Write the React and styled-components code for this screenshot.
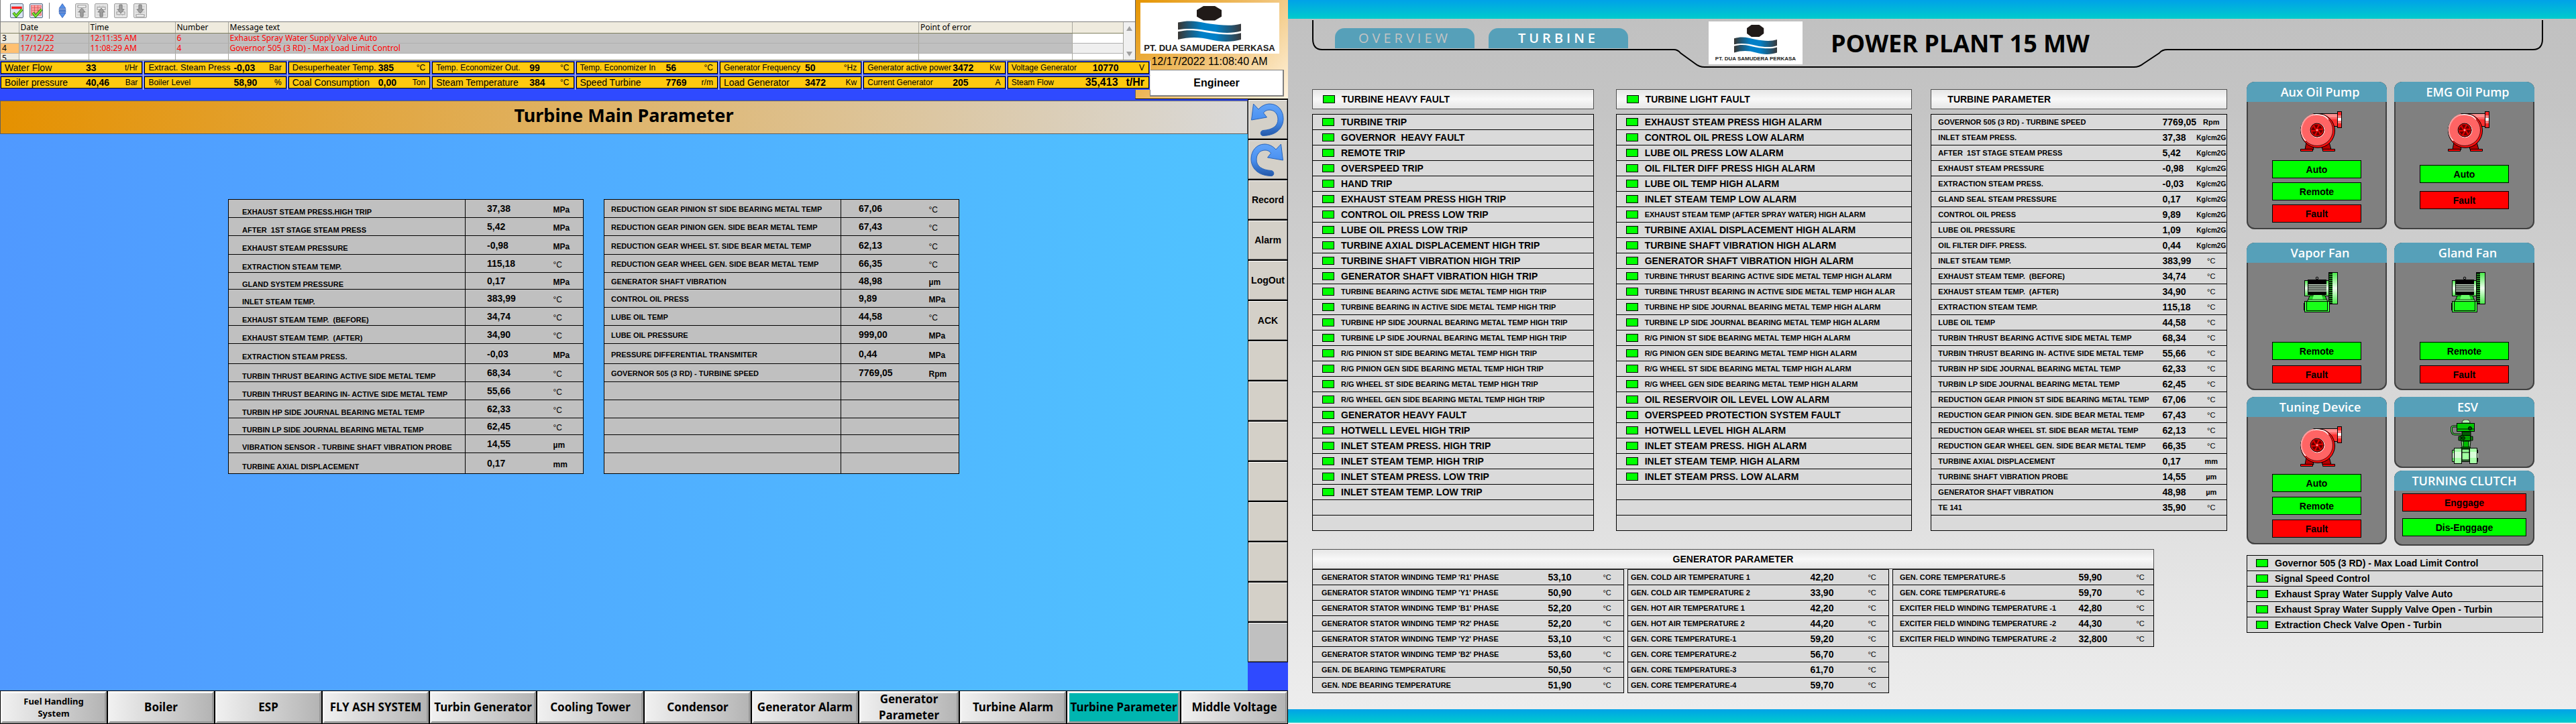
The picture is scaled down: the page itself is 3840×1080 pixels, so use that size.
import React from "react";
import styled, { createGlobalStyle } from "styled-components";

const ARIAL = '"Liberation Sans", Arial, sans-serif';
const HUMANIST = '"Noto Sans", "Open Sans", sans-serif';

const Global = createGlobalStyle`
  *, *::before, *::after { box-sizing: border-box; }
  body { margin: 0; background: #2f4aff; }
  button { font: inherit; color: inherit; cursor: pointer; }
  table { border-collapse: collapse; table-layout: fixed; width: 100%; }
  td, th { padding: 0; text-align: left; white-space: nowrap; }
`;

const Desktop = styled.div`
  display: flex;
  min-height: 100vh;
  font-family: ${ARIAL};
  color: #000;
`;

/* ---------- left monitor ---------- */

const Station = styled.section`
  flex: 1 1 0;
  min-width: 0;
  display: flex;
  flex-direction: column;
  background: #2f4aff;
`;

const Header = styled.header`
  display: grid;
  grid-template-columns: minmax(0, 1fr) 23px 205px;
  grid-template-rows: 90px 58px;
`;

const AlarmView = styled.div`
  grid-column: 1;
  grid-row: 1;
  overflow: hidden;
  background: #fff;
  border-left: 1px solid #808080;
  border-bottom: 1px solid #8a8a70;
`;

const Toolbar = styled.div`
  display: flex;
  align-items: center;
  gap: 9px;
  height: 33px;
  padding-left: 14px;
  border-bottom: 1px solid #808080;
`;

const ToolButton = styled.button`
  display: flex;
  padding: 0;
  border: 0;
  background: none;
`;

const ToolDivider = styled.span`
  width: 1px;
  height: 24px;
  background: #808080;
`;

const AlarmBody = styled.div`
  display: flex;
  align-items: stretch;
  height: 56px;
`;

const AlarmTable = styled.table`
  flex: 1;
  width: auto;
  min-width: 0;
  font: 12px/14px ${HUMANIST};
  align-self: flex-start;

  th { background: #efebde; font-weight: 400; height: 16px; border-bottom: 1px solid #808060; }
  td { height: 15px; border-bottom: 1px solid #b0b0b0; }
  th, td { padding-left: 2px; border-right: 1px solid #a8a8a0; }
`;

const AlarmRow = styled.tr`
  color: #ff0000;
  background: ${(p) => (p.$filled ? "#c0c0c0" : "#fff")};

  td:first-child { color: #000; background: ${(p) => (p.$current ? "#ffc070" : "#efebde")}; }
  td:last-child { background: ${(p) => (p.$current ? "#efefef" : "#fff")}; }
`;

const ScrollTrack = styled.div`
  width: 17px;
  display: flex;
  flex-direction: column;
  justify-content: space-between;
  align-items: center;
  padding: 6px 0 5px;
  background: #f0f0f0;
`;

const BrandBack = styled.div`
  grid-column: 2 / 4;
  grid-row: 1 / 3;
  border-left: 1px solid #606060;
  border-bottom: 1px solid #000;
  background: linear-gradient(135deg, #e59400 0%, #f0c070 50%, #fff4e0 100%);
`;

const Brand = styled.div`
  grid-column: 2 / 4;
  grid-row: 1 / 3;
  display: flex;
  flex-direction: column;
  align-items: center;
  padding: 4px 6px 0 0;
`;

const LogoBox = styled.figure`
  display: flex;
  flex-direction: column;
  align-items: center;
  justify-content: space-between;
  flex: none;
  width: ${(p) => p.$w}px;
  height: ${(p) => p.$h}px;
  margin: 0;
  padding: 5px 0 2px;
  background: #fff;

  figcaption {
    font: bold ${(p) => p.$font}px/12px ${ARIAL};
    color: #201a18;
    white-space: nowrap;
  }
`;

const Clock = styled.time`
  font-size: 16px;
  line-height: 24px;
`;

const UserBox = styled.div`
  align-self: flex-end;
  display: flex;
  align-items: center;
  justify-content: center;
  width: 200px;
  height: 40px;
  background: #fff;
  border: 1px solid #808080;
  border-width: 1px 2px 2px 1px;
  font-weight: 700;
  font-size: 16px;
`;

const Readings = styled.div`
  grid-column: 1 / 3;
  grid-row: 2;
  z-index: 1;
  align-self: start;
  display: grid;
  grid-template-columns: repeat(8, minmax(0, 1fr));
  grid-auto-rows: 22px;
  width: 100%;
`;

const ReadingFrame = styled.div`
  padding: 1px 1px 2px;
  background: #2f4aff;
  border-right: 1px solid #e0e0e0;
  border-top: 1px solid #a0a0a0;
`;

const Reading = styled.div`
  display: grid;
  grid-template-columns: ${(p) => p.$at}px minmax(0, 1fr) auto;
  align-items: center;
  height: 100%;
  padding: 0 6px 0 5px;
  background: #ffc90e;
  border: 1px solid #000;
  font-size: ${(p) => p.$size}px;
  line-height: 16px;
  white-space: nowrap;

  strong { font-size: ${(p) => (p.$wide ? 16 : 14)}px; }
  span:last-child { font-size: ${(p) => (p.$wide ? 16 : 12)}px; font-weight: ${(p) => (p.$wide ? 700 : 400)}; }
`;

const Body = styled.div`
  flex: 1;
  display: flex;
`;

const Canvas = styled.main`
  flex: 1;
  min-width: 0;
  display: flex;
  flex-direction: column;
  padding-top: 2px;
`;

const ScreenTitle = styled.h1`
  display: flex;
  align-items: center;
  justify-content: center;
  height: 50px;
  margin: 0;
  padding-bottom: 6px;
  border: 1px solid #606060;
  background: linear-gradient(90deg, #e59100, #d9d9d9);
  font: bold 27px/36px ${HUMANIST};
`;

const Stage = styled.div`
  flex: 1;
  display: grid;
  grid-template-columns: 340fr 530fr 30fr 530fr 430fr;
  align-items: start;
  padding-top: 97px;
  background: linear-gradient(90deg, #5099ff, #50c3ff);
`;

const StageTable = styled.table`
  grid-column: ${(p) => p.$col};
  background: #c0c0c0;
  border: 1px solid #000;
  font: bold 11px/12px ${ARIAL};

  tr { border-bottom: 1px solid #000; }
  th {
    padding-left: ${(p) => p.$pad}px;
    padding-top: ${(p) => p.$drop}px;
    border-right: 1px solid #000;
    white-space: pre;
  }
  td { font-size: 14px; padding-left: ${(p) => p.$value}px; }
  td:last-child { font-size: 12px; padding-left: 0; padding-top: 4px; }
`;

const StageRow = styled.tr`
  height: ${(p) => p.$h}px;
`;

const Unit = styled.span`
  font-weight: ${(p) => (p.$plain ? 400 : 700)};
`;

const SideNav = styled.nav`
  flex: none;
  display: flex;
  flex-direction: column;
  width: 60px;
`;

const SideButton = styled.button`
  display: flex;
  align-items: center;
  justify-content: center;
  height: 60px;
  padding: 0;
  border: 2px solid;
  border-color: #fff #808080 #808080 #fff;
  outline: 1px solid #000;
  outline-offset: -1px;
  background: ${(p) => (p.$spare ? "#c0c0c0" : "#d4d0c8")};
  font-weight: 700;
  font-size: 14px;
`;

const ScreenNav = styled.nav`
  display: grid;
  grid-template-columns: repeat(8, 160fr) 150fr 160fr 170fr 160fr;
  height: 50px;
`;

const ScreenButton = styled.button`
  min-width: 0;
  height: 50px;
  padding: 0 ${(p) => (p.$small ? 20 : 0)}px;
  overflow: hidden;
  border: 4px solid;
  border-color: #fff #999 #999 #f4f4f4;
  outline: 1px solid #000;
  outline-offset: -1px;
  background: ${(p) => (p.$active ? "#00b5b0" : "linear-gradient(90deg, #f0f0f0, #b4b4b4)")};
  font: bold ${(p) => (p.$small ? "13px/18px" : "17px/24px")} ${HUMANIST};
  white-space: ${(p) => (p.$wrap ? "normal" : "nowrap")};
  display: flex;
  align-items: center;
  justify-content: center;
`;

/* ---------- right monitor ---------- */

const Overview = styled.section`
  flex: 1 1 0;
  min-width: 0;
  display: flex;
  flex-direction: column;
  padding-bottom: 2px;
  background: linear-gradient(180deg, #c0c0c0 0%, #c4c4c4 14%, #eee 100%);
`;

const Band = styled.div`
  height: ${(p) => p.$h}px;
  background: linear-gradient(180deg, #00a2e8, #00cccc);
`;

const PlantHeader = styled.header`
  position: relative;
  display: flex;
  align-items: flex-start;
  height: 105px;
  padding: 4px 0 0 70px;
`;

const Outline = styled.svg`
  position: absolute;
  left: 0;
  top: 0;
  width: 100%;
  height: 76px;
  pointer-events: none;
`;

const Tab = styled.button`
  width: 208px;
  height: 30px;
  margin: 10px 21px 0 0;
  padding: 0;
  border: 0;
  border-radius: 14px 14px 0 0;
  background: #56a0b9;
  color: ${(p) => (p.$active ? "#fff" : "#c4c4c4")};
  font: ${(p) => (p.$active ? 600 : 400)} 20px/30px "Open Sans", sans-serif;
  letter-spacing: 5px;
`;

const PlantTitle = styled.h2`
  margin: 0 0 0 42px;
  font: bold 36px/66px "Open Sans", sans-serif;
  white-space: nowrap;
`;

const LogoSlot = styled.div`
  margin-left: 99px;
`;

const Content = styled.div`
  flex: 1;
  display: flex;
  gap: 29px;
  padding: 0 49px 0 36px;
`;

const Faults = styled.div`
  flex: 1;
  min-width: 0;
`;

const Columns = styled.div`
  display: grid;
  grid-template-columns: minmax(0, 420fr) 33px minmax(0, 442fr) 28px minmax(0, 442fr);
  align-items: start;
`;

const Group = styled.section`
  grid-column: ${(p) => p.$col};
`;

const GroupTitle = styled.h3`
  display: flex;
  align-items: center;
  justify-content: ${(p) => (p.$center ? "center" : "flex-start")};
  gap: 10px;
  height: 30px;
  margin: 0 0 ${(p) => (p.$center ? 0 : 7)}px;
  padding: 0 ${(p) => (p.$center ? 0 : p.$pad || 15)}px;
  border: 1px solid #505050;
  background: linear-gradient(180deg, #e6e6e6, #f8f8f8 50%, #e6e6e6);
  font-size: 14px;
  line-height: 16px;
`;

const LampList = styled.ul`
  margin: 0;
  padding: 0;
  list-style: none;
  border: 1px solid #000;
  border-bottom: 0;
  background: #dadada;
`;

const LampRow = styled.li`
  display: flex;
  align-items: center;
  gap: 10px;
  height: 23px;
  padding-left: ${(p) => p.$pad || 14}px;
  border-bottom: 1px solid #000;
  font: bold ${(p) => (p.$small ? 11 : 14)}px/16px ${ARIAL};
  white-space: pre;
  overflow: hidden;
`;

const Lamp = styled.span`
  flex: none;
  width: 18px;
  height: 12px;
  border: 1px solid #000;
  background: #00ff00;
`;

const DataTable = styled.table`
  background: #dadada;
  border: 1px solid #000;
  font: bold 11px/12px ${ARIAL};

  tr { height: 23px; border-bottom: 1px solid #000; }
  th { padding-left: ${(p) => p.$pad}px; white-space: pre; }
  td { font-size: 14px; }
  td:last-child { font-size: 11px; text-align: ${(p) => (p.$center ? "center" : "left")}; }
`;

const TinyUnit = styled.span`
  font-size: 10px;
  font-weight: 700;
`;

const Generator = styled.section`
  width: 92%;
  margin-top: 27px;
`;

const GeneratorTables = styled.div`
  display: grid;
  grid-template-columns: minmax(0, 465fr) minmax(0, 390fr) minmax(0, 390fr);
  column-gap: 5px;
  align-items: start;
`;

const Equipment = styled.aside`
  flex: none;
  width: 442px;
  padding: 0;
  margin-top: -11px;
`;

const Cards = styled.div`
  display: grid;
  grid-template-columns: 209px 209px;
  column-gap: 11px;
`;

const CardColumn = styled.div`
  display: flex;
  flex-direction: column;
`;

const Card = styled.section`
  display: flex;
  flex-direction: column;
  align-items: center;
  height: ${(p) => p.$h}px;
  margin-bottom: ${(p) => p.$after}px;
  padding-bottom: ${(p) => p.$foot}px;
  border-radius: 12px;
  background: #808080;
  box-shadow: inset 0 0 0 2px #404040;
`;

const CardTitle = styled.h3`
  align-self: stretch;
  flex: none;
  height: 30px;
  margin: 0 0 ${(p) => p.$gap}px;
  padding-left: ${(p) => (p.$wide ? 0 : 10)}px;
  border-radius: 12px 12px 0 0;
  background: #56a0b9;
  color: #fff;
  text-align: center;
  font: 600 18px/30px "Open Sans", sans-serif;
  white-space: nowrap;
`;

const CardIcon = styled.div`
  display: flex;
  padding-left: ${(p) => p.$shift}px;
`;

const CardStates = styled.div`
  display: flex;
  flex-direction: column;
  gap: ${(p) => p.$gap}px;
  margin-top: auto;
`;

const State = styled.button`
  width: ${(p) => (p.$wide ? 185 : 133)}px;
  height: 27px;
  padding: 0;
  border: 1px solid #000;
  background: ${(p) => (p.$bad ? "#ff0000" : "#00ff00")};
  font: bold 14px/16px ${ARIAL};
`;

const Signals = styled.div`
  margin-top: 14px;
`;

/* ---------- drawings ---------- */

function LogoMark({ w, h, id }) {
  return (
    <svg width={w} height={h} viewBox="0 0 94 54" preserveAspectRatio="none" aria-hidden="true">
      <defs>
        <linearGradient id={id}>
          <stop offset="0" stopColor="#3a3632" />
          <stop offset="0.38" stopColor="#0080c8" />
          <stop offset="0.6" stopColor="#0080c8" />
          <stop offset="1" stopColor="#3a3a3c" />
        </linearGradient>
      </defs>
      <path d="M38 0h17l10 6v10l-10 6H38l-10-6V6z" fill="#201a18" />
      <path d="M0 25c20-5 34 0 48 2s32 4 46 0v11c-14 4-30 3-46 0S16 33 0 36z" fill={`url(#${id})`} />
      <path d="M0 39c20-5 34 0 48 2s32 4 46 0v10c-14 4-30 4-46 0S16 47 0 51z" fill={`url(#${id})`} />
    </svg>
  );
}

function Logo({ w, h, font, mw, mh, id }) {
  return (
    <LogoBox $w={w} $h={h} $font={font}>
      <LogoMark w={mw} h={mh} id={id} />
      <figcaption>PT. DUA SAMUDERA PERKASA</figcaption>
    </LogoBox>
  );
}

function AckIcon({ all }) {
  return (
    <svg width="20" height="22" viewBox="0 0 20 22" aria-hidden="true">
      <rect x="0.5" y="0.5" width="19" height="21" rx="1.5" fill="#d8e4f4" stroke="#5a6a80" />
      {(all ? [3, 7, 11, 15] : [5]).map((y) => (
        <rect key={y} x="2.5" y={y} width="15" height="3" fill={all ? "#ffb0b0" : "#ff2020"} stroke="#e03030" strokeWidth="0.6" />
      ))}
      {all && <path d="M7.5 3v15M12.5 3v15" stroke="#e03030" strokeWidth="0.6" />}
      <path d="M5 14l4 5 9-10" fill="none" stroke="#1c7a10" strokeWidth="4" />
      <path d="M5 14l4 5 9-10" fill="none" stroke="#7ee030" strokeWidth="2.2" />
    </svg>
  );
}

function SortIcon() {
  return (
    <svg width="20" height="22" viewBox="-4.5 0 20 22" aria-hidden="true">
      <g fill="#5590e8" stroke="#2050b0" strokeWidth="0.7">
        <path d="M5.5 0.5l5 7h-10zM5.5 21.5l5-7h-10z" />
        <path d="M0.5 9h10v1.5h-10zM0.5 11.7h10v1.5h-10z" />
      </g>
    </svg>
  );
}

function PageIcon({ down, edge }) {
  return (
    <svg width="20" height="22" viewBox="0 0 20 22" aria-hidden="true">
      <rect x="0.5" y="0.5" width="19" height="21" rx="1.5" fill="#e4e4e4" stroke="#a0a0a0" />
      <path d="M3 5h14M3 9h14M3 13h14M3 17h14M7.5 3v16M12.5 3v16" stroke="#c8c8c8" />
      <rect x="4" y={down ? (edge ? 17 : 13) : edge ? 3 : 6} width="12" height="3" fill="#fff" stroke="#808080" strokeWidth="0.8" />
      <path
        d={down ? "M10 15l-5-6h3V2h4v7h3z" : "M10 7l-5 6h3v7h4v-7h3z"}
        fill="#a0a0a0"
        stroke="#707070"
        strokeWidth="0.8"
      />
    </svg>
  );
}

function TurnArrow({ flip }) {
  return (
    <svg width="56" height="56" viewBox="2 2 56 56" aria-hidden="true">
      <defs>
        <linearGradient id={flip ? "arrowR" : "arrowL"} x1="0" y1="0" x2="0" y2="1">
          <stop offset="0" stopColor="#62a4f8" />
          <stop offset="0.5" stopColor="#4a90f0" />
          <stop offset="1" stopColor="#2458a8" />
        </linearGradient>
      </defs>
      <path
        transform={flip ? "translate(58 0) scale(-1 1)" : undefined}
        d="M5.5 31L8.5 7l7.5 8C21 9.5 27 7 33 7c12 0 20 10 20 22 0 13-9 25-30 25.500-5 0-5-7.500 0-8C37 45.500 45 40 45 30c0-8-5-14-13-14-4 0-7 2-8.500 4.500l5 6.500z"
        fill={`url(#${flip ? "arrowR" : "arrowL"})`}
        stroke="#2a64b8"
        strokeWidth="1"
      />
    </svg>
  );
}

function PumpIcon() {
  const spokes = [0, 60, 120, 180, 240, 300];
  return (
    <svg width="62" height="60" viewBox="0 0 62 60" role="img" aria-label="pump">
      <path d="M9 46l-2 11h13l-1-4h13l1 4h13l-3-11z" fill="#b80000" stroke="#000" />
      <path d="M0.5 56.5h18v3h-18zM33.5 56.5h18v3h-18z" fill="#ff0000" stroke="#000" />
      <path d="M19 3.5h37v19h-5L40 30z" fill="#ff3030" stroke="#000" />
      <path d="M22 4h33v5H30z" fill="#ff9090" />
      <path d="M36 9h19v3H38z" fill="#ff6060" />
      <circle cx="26" cy="29" r="25.5" fill="#ff1010" stroke="#000" />
      <circle cx="25" cy="28" r="23.5" fill="#ff6464" stroke="#200" strokeWidth="0.8" />
      <path d="M8 44A23 23 0 0 1 30 5.5q8 1 12 7" fill="none" stroke="#fff" strokeWidth="1.3" />
      <path d="M4 38A24 24 0 0 1 20 4.5" fill="none" stroke="#ff9c9c" strokeWidth="2" />
      <circle cx="25.5" cy="28.5" r="10.5" fill="#ff0000" stroke="#fff" />
      <circle cx="25" cy="28" r="10" fill="#e00000" stroke="#000" />
      {spokes.map((a) => (
        <path key={a} transform={`rotate(${a} 25 28)`} d="M26 26l3.5-5.5 3 5z" fill="#600000" />
      ))}
      <circle cx="25" cy="28" r="1.5" fill="#ffa0a0" />
      <rect x="55.5" y="0.5" width="6" height="24" fill="#ff2828" stroke="#000" />
      <path d="M56 6h5v12h-5z" fill="#ff8080" />
      <path d="M56 10h5v4h-5z" fill="#fff" />
    </svg>
  );
}

function FanIcon({ id }) {
  return (
    <svg width="51" height="60" viewBox="0 0 51 60" role="img" aria-label="fan">
      <defs>
        <linearGradient id={id} x1="0" y1="0" x2="0" y2="1">
          <stop offset="0" stopColor="#48e848" />
          <stop offset="0.5" stopColor="#f0fff0" />
          <stop offset="1" stopColor="#48e848" />
        </linearGradient>
      </defs>
      <circle cx="20" cy="9" r="1.8" fill="none" stroke="#000" />
      <rect x="1.5" y="12.5" width="36" height="23" fill={`url(#${id})`} stroke="#000" />
      <path d="M6 11h28v23H6z" fill="#000" />
      <path d="M7 19h27M7 22h27M7 25h27M7 28h27" stroke="#e8ffe8" strokeWidth="1.4" />
      <path d="M9 35h23l3 8H6z" fill="#20d820" stroke="#000" />
      <path d="M15 34h12l2 7H13z" fill="#68ff68" />
      <path d="M6 41h29v3H6z" fill="#70ff70" stroke="#000" strokeWidth="0.8" />
      <rect x="37.5" y="0.5" width="13" height="47" fill={`url(#${id})`} stroke="#000" />
      <path d="M38 1h5v46h-5z" fill="#20a020" />
      <path d="M40.5 1v46" stroke="#000" strokeWidth="5" strokeDasharray="1.5 1.5" />
      <rect x="1.5" y="43.5" width="37" height="16" fill="#40ff40" stroke="#000" />
      <rect x="4.5" y="43.5" width="31" height="14" fill="#18ff18" stroke="#000" />
      <path d="M0.5 46v11" stroke="#000" />
    </svg>
  );
}

function ValveIcon() {
  return (
    <svg width="43" height="66" viewBox="0 0 43 66" role="img" aria-label="valve">
      <path d="M17 5q0-5 6-5t6 5z" fill="#b0ffb0" stroke="#000" strokeWidth="0.8" />
      <path d="M9 10H4q-3 0-2.500 4v3q1 5 5 5h9" fill="none" stroke="#000" strokeWidth="3" />
      <path d="M9 10H4q-3 0-2.500 4v3q1 5 5 5h9" fill="none" stroke="#60ff60" strokeWidth="1.2" />
      <rect x="9.5" y="5.5" width="26" height="12" fill="#00c800" stroke="#000" />
      <path d="M9 14h27" stroke="#000" />
      <circle cx="29" cy="13" r="2.6" fill="#004800" stroke="#000" />
      <path d="M17 18h13v6H17z" fill="#006000" stroke="#000" />
      <path d="M12 25h21v6H12z" fill="#008000" stroke="#000" />
      <path d="M15.5 23.5h14v8h-14z" fill="#00a000" stroke="#000" />
      <circle cx="19" cy="27.5" r="2.5" fill="#005000" stroke="#000" strokeWidth="0.8" />
      <path d="M16 32h14l-1 9H17z" fill="#80ff80" stroke="#000" />
      <path d="M19 32h8v9h-8z" fill="#00c000" stroke="#000" />
      <path d="M15 41h15v3H15z" fill="#004800" />
      <path d="M2.5 45.5h38v17h-38z" fill="#70ff70" stroke="#000" />
      <path d="M3 50h4v7H3zM37 50h4v7h-4z" fill="#d8ffd8" />
      <rect x="5.5" y="42.5" width="11" height="23" fill="#a8ffa8" stroke="#000" />
      <rect x="28.5" y="42.5" width="11" height="23" fill="#a8ffa8" stroke="#000" />
      <path d="M6 48h10v9H6zM29 48h10v9H29z" fill="#d8ffd8" />
      <path d="M17 44h11v17H17z" fill="#90f890" stroke="#000" />
      <path d="M17 49h11v11H17z" fill="#a0ffa0" stroke="#000" />
    </svg>
  );
}

/* ---------- data ---------- */

const readings = [
  { label: "Water Flow", value: "33", unit: "t/Hr", size: 14, at: 121 },
  { label: "Extract. Steam Press", value: "-0,03", unit: "Bar", size: 13, at: 127 },
  { label: "Desuperheater Temp.", value: "385", unit: "°C", size: 13, at: 128 },
  { label: "Temp. Economizer Out.", value: "99", unit: "°C", size: 12, at: 139 },
  { label: "Temp. Economizer In", value: "56", unit: "°C", size: 12, at: 128 },
  { label: "Generator Frequency", value: "50", unit: "°Hz", size: 12, at: 121 },
  { label: "Generator active power", value: "3472", unit: "Kw", size: 12, at: 127 },
  { label: "Voltage Generator", value: "10770", unit: "V", size: 12, at: 121 },
  { label: "Boiler pressure", value: "40,46", unit: "Bar", size: 14, at: 121 },
  { label: "Boiler Level", value: "58,90", unit: "%", size: 12, at: 127 },
  { label: "Coal Consumption", value: "0,00", unit: "Ton", size: 14, at: 128 },
  { label: "Steam Temperature", value: "384", unit: "°C", size: 14, at: 139 },
  { label: "Speed Turbine", value: "7769", unit: "r/m", size: 14, at: 128 },
  { label: "Load Generator", value: "3472", unit: "Kw", size: 14, at: 121 },
  { label: "Current Generator", value: "205", unit: "A", size: 12, at: 127 },
  { label: "Steam Flow", value: "35,413", unit: "t/Hr", size: 12, at: 110, wide: true },
];

const rowHeights = [27, 27, 28, 27, 25, 27, 27, 27, 30, 27, 27, 27, 25, 27, 31];

const mainLeft = [
  ["EXHAUST STEAM PRESS.HIGH TRIP", "37,38", "MPa"],
  ["AFTER  1ST STAGE STEAM PRESS", "5,42", "MPa"],
  ["EXHAUST STEAM PRESSURE", "-0,98", "MPa"],
  ["EXTRACTION STEAM TEMP.", "115,18", "°C"],
  ["GLAND SYSTEM PRESSURE", "0,17", "MPa"],
  ["INLET STEAM TEMP.", "383,99", "°C"],
  ["EXHAUST STEAM TEMP.  (BEFORE)", "34,74", "°C"],
  ["EXHAUST STEAM TEMP.  (AFTER)", "34,90", "°C"],
  ["EXTRACTION STEAM PRESS.", "-0,03", "MPa"],
  ["TURBIN THRUST BEARING ACTIVE SIDE METAL TEMP", "68,34", "°C"],
  ["TURBIN THRUST BEARING IN- ACTIVE SIDE METAL TEMP", "55,66", "°C"],
  ["TURBIN HP SIDE JOURNAL BEARING METAL TEMP", "62,33", "°C"],
  ["TURBIN LP SIDE JOURNAL BEARING METAL TEMP", "62,45", "°C"],
  ["VIBRATION SENSOR - TURBINE SHAFT VIBRATION PROBE", "14,55", "µm"],
  ["TURBINE AXIAL DISPLACEMENT", "0,17", "mm"],
];

const mainRight = [
  ["REDUCTION GEAR PINION ST SIDE BEARING METAL TEMP", "67,06", "°C"],
  ["REDUCTION GEAR PINION GEN. SIDE BEAR METAL TEMP", "67,43", "°C"],
  ["REDUCTION GEAR WHEEL ST. SIDE BEAR METAL TEMP", "62,13", "°C"],
  ["REDUCTION GEAR WHEEL GEN. SIDE BEAR METAL TEMP", "66,35", "°C"],
  ["GENERATOR SHAFT VIBRATION", "48,98", "µm"],
  ["CONTROL OIL PRESS", "9,89", "MPa"],
  ["LUBE OIL TEMP", "44,58", "°C"],
  ["LUBE OIL PRESSURE", "999,00", "MPa"],
  ["PRESSURE DIFFERENTIAL TRANSMITER", "0,44", "MPa"],
  ["GOVERNOR 505 (3 RD) - TURBINE SPEED", "7769,05", "Rpm"],
];

const screens = [
  "Fuel Handling System", "Boiler", "ESP", "FLY ASH SYSTEM", "Turbin Generator", "Cooling Tower",
  "Condensor", "Generator Alarm", "Generator Parameter", "Turbine Alarm", "Turbine Parameter", "Middle Voltage",
];

const heavy = [
  "TURBINE TRIP", "GOVERNOR  HEAVY FAULT", "REMOTE TRIP", "OVERSPEED TRIP", "HAND TRIP",
  "EXHAUST STEAM PRESS HIGH TRIP", "CONTROL OIL PRESS LOW TRIP", "LUBE OIL PRESS LOW TRIP",
  "TURBINE AXIAL DISPLACEMENT HIGH TRIP", "TURBINE SHAFT VIBRATION HIGH TRIP", "GENERATOR SHAFT VIBRATION HIGH TRIP",
  "*TURBINE BEARING ACTIVE SIDE METAL TEMP HIGH TRIP", "*TURBINE BEARING IN ACTIVE SIDE METAL TEMP HIGH TRIP",
  "*TURBINE HP SIDE JOURNAL BEARING METAL TEMP HIGH TRIP", "*TURBINE LP SIDE JOURNAL BEARING METAL TEMP HIGH TRIP",
  "*R/G PINION ST SIDE BEARING METAL TEMP HIGH TRIP", "*R/G PINION GEN SIDE BEARING METAL TEMP HIGH TRIP",
  "*R/G WHEEL ST SIDE BEARING METAL TEMP HIGH TRIP", "*R/G WHEEL GEN SIDE BEARING METAL TEMP HIGH TRIP",
  "GENERATOR HEAVY FAULT", "HOTWELL LEVEL HIGH TRIP", "INLET STEAM PRESS. HIGH TRIP", "INLET STEAM TEMP. HIGH TRIP",
  "INLET STEAM PRESS. LOW TRIP", "INLET STEAM TEMP. LOW TRIP", "", "",
];

const light = [
  "EXHAUST STEAM PRESS HIGH ALARM", "CONTROL OIL PRESS LOW ALARM", "LUBE OIL PRESS LOW ALARM",
  "OIL FILTER DIFF PRESS HIGH ALARM", "LUBE OIL TEMP HIGH ALARM", "INLET STEAM TEMP LOW ALARM",
  "*EXHAUST STEAM TEMP (AFTER SPRAY WATER) HIGH ALARM", "TURBINE AXIAL DISPLACEMENT HIGH ALARM",
  "TURBINE SHAFT VIBRATION HIGH ALARM", "GENERATOR SHAFT VIBRATION HIGH ALARM",
  "*TURBINE THRUST BEARING ACTIVE SIDE METAL TEMP HIGH ALARM", "*TURBINE THRUST BEARING IN ACTIVE SIDE METAL TEMP HIGH ALAR",
  "*TURBINE HP SIDE JOURNAL BEARING METAL TEMP HIGH ALARM", "*TURBINE LP SIDE JOURNAL BEARING METAL TEMP HIGH ALARM",
  "*R/G PINION ST SIDE BEARING METAL TEMP HIGH ALARM", "*R/G PINION GEN SIDE BEARING METAL TEMP HIGH ALARM",
  "*R/G WHEEL ST SIDE BEARING METAL TEMP HIGH ALARM", "*R/G WHEEL GEN SIDE BEARING METAL TEMP HIGH ALARM",
  "OIL RESERVOIR OIL LEVEL LOW ALARM", "OVERSPEED PROTECTION SYSTEM FAULT", "HOTWELL LEVEL HIGH ALARM",
  "INLET STEAM PRESS. HIGH ALARM", "INLET STEAM TEMP. HIGH ALARM", "INLET STEAM PRSS. LOW ALARM", "", "", "",
];

const KG = "Kg/cm2G";
const turbine = [
  ["GOVERNOR 505 (3 RD) - TURBINE SPEED", "7769,05", "Rpm"],
  ["INLET STEAM PRESS.", "37,38", KG],
  ["AFTER  1ST STAGE STEAM PRESS", "5,42", KG],
  ["EXHAUST STEAM PRESSURE", "-0,98", KG],
  ["EXTRACTION STEAM PRESS.", "-0,03", KG],
  ["GLAND SEAL STEAM PRESSURE", "0,17", KG],
  ["CONTROL OIL PRESS", "9,89", KG],
  ["LUBE OIL PRESSURE", "1,09", KG],
  ["OIL FILTER DIFF. PRESS.", "0,44", KG],
  ["INLET STEAM TEMP.", "383,99", "°C"],
  ["EXHAUST STEAM TEMP.  (BEFORE)", "34,74", "°C"],
  ["EXHAUST STEAM TEMP.  (AFTER)", "34,90", "°C"],
  ["EXTRACTION STEAM TEMP.", "115,18", "°C"],
  ["LUBE OIL TEMP", "44,58", "°C"],
  ["TURBIN THRUST BEARING ACTIVE SIDE METAL TEMP", "68,34", "°C"],
  ["TURBIN THRUST BEARING IN- ACTIVE SIDE METAL TEMP", "55,66", "°C"],
  ["TURBIN HP SIDE JOURNAL BEARING METAL TEMP", "62,33", "°C"],
  ["TURBIN LP SIDE JOURNAL BEARING METAL TEMP", "62,45", "°C"],
  ["REDUCTION GEAR PINION ST SIDE BEARING METAL TEMP", "67,06", "°C"],
  ["REDUCTION GEAR PINION GEN. SIDE BEAR METAL TEMP", "67,43", "°C"],
  ["REDUCTION GEAR WHEEL ST. SIDE BEAR METAL TEMP", "62,13", "°C"],
  ["REDUCTION GEAR WHEEL GEN. SIDE BEAR METAL TEMP", "66,35", "°C"],
  ["TURBINE AXIAL DISPLACEMENT", "0,17", "mm"],
  ["TURBINE SHAFT VIBRATION PROBE", "14,55", "µm"],
  ["GENERATOR SHAFT VIBRATION", "48,98", "µm"],
  ["TE 141", "35,90", "°C"],
  ["", "", ""],
];

const gen1 = [
  ["GENERATOR STATOR WINDING TEMP 'R1' PHASE", "53,10", "°C"],
  ["GENERATOR STATOR WINDING TEMP 'Y1' PHASE", "50,90", "°C"],
  ["GENERATOR STATOR WINDING TEMP 'B1' PHASE", "52,20", "°C"],
  ["GENERATOR STATOR WINDING TEMP 'R2' PHASE", "52,20", "°C"],
  ["GENERATOR STATOR WINDING TEMP 'Y2' PHASE", "53,10", "°C"],
  ["GENERATOR STATOR WINDING TEMP 'B2' PHASE", "53,60", "°C"],
  ["GEN. DE BEARING TEMPERATURE", "50,50", "°C"],
  ["GEN. NDE BEARING TEMPERATURE", "51,90", "°C"],
];
const gen2 = [
  ["GEN. COLD AIR TEMPERATURE 1", "42,20", "°C"],
  ["GEN. COLD AIR TEMPERATURE 2", "33,90", "°C"],
  ["GEN. HOT AIR TEMPERATURE 1", "42,20", "°C"],
  ["GEN. HOT AIR TEMPERATURE 2", "44,20", "°C"],
  ["GEN. CORE TEMPERATURE-1", "59,20", "°C"],
  ["GEN. CORE TEMPERATURE-2", "56,70", "°C"],
  ["GEN. CORE TEMPERATURE-3", "61,70", "°C"],
  ["GEN. CORE TEMPERATURE-4", "59,70", "°C"],
];
const gen3 = [
  ["GEN. CORE TEMPERATURE-5", "59,90", "°C"],
  ["GEN. CORE TEMPERATURE-6", "59,70", "°C"],
  ["EXCITER FIELD WINDING TEMPERATURE -1", "42,80", "°C"],
  ["EXCITER FIELD WINDING TEMPERATURE -2", "44,30", "°C"],
  ["EXCITER FIELD WINDING TEMPERATURE -2", "32,800", "°C"],
];

const signals = [
  "Governor 505 (3 RD) - Max Load Limit Control",
  "Signal Speed Control",
  "Exhaust Spray Water Supply Valve Auto",
  "Exhaust Spray Water Supply Valve Open - Turbin",
  "Extraction Check Valve Open - Turbin",
];

/* ---------- composed parts ---------- */

function Alarms() {
  return (
    <AlarmView>
      <Toolbar>
        <ToolButton aria-label="Acknowledge"><AckIcon /></ToolButton>
        <ToolButton aria-label="Acknowledge all"><AckIcon all /></ToolButton>
        <ToolDivider />
        <ToolButton aria-label="Sort"><SortIcon /></ToolButton>
        <ToolButton aria-label="First page"><PageIcon edge /></ToolButton>
        <ToolButton aria-label="Previous page"><PageIcon /></ToolButton>
        <ToolButton aria-label="Next page"><PageIcon down /></ToolButton>
        <ToolButton aria-label="Last page"><PageIcon down edge /></ToolButton>
      </Toolbar>
      <AlarmBody>
        <AlarmTable>
          <colgroup>
            <col style={{ width: 27 }} /><col style={{ width: 104 }} /><col style={{ width: 129 }} />
            <col style={{ width: 79 }} /><col /><col style={{ width: 229 }} /><col style={{ width: 76 }} />
          </colgroup>
          <thead>
            <tr><th /><th>Date</th><th>Time</th><th>Number</th><th>Message text</th><th>Point of error</th><th /></tr>
          </thead>
          <tbody>
            <AlarmRow $filled>
              <td>3</td><td>17/12/22</td><td>12:11:35 AM</td><td>6</td>
              <td>Exhaust Spray Water Supply Valve Auto</td><td /><td />
            </AlarmRow>
            <AlarmRow $filled $current>
              <td>4</td><td>17/12/22</td><td>11:08:29 AM</td><td>4</td>
              <td>Governor 505 (3 RD) - Max Load Limit Control</td><td /><td />
            </AlarmRow>
            <AlarmRow><td>5</td><td /><td /><td /><td /><td /><td /></AlarmRow>
          </tbody>
        </AlarmTable>
        <ScrollTrack>
          <svg width="9" height="7" viewBox="0 0 9 7" aria-hidden="true"><path d="M4.5 0L9 7H0z" fill="#a0a0a0" /></svg>
          <svg width="9" height="7" viewBox="0 0 9 7" aria-hidden="true"><path d="M4.5 7L9 0H0z" fill="#a0a0a0" /></svg>
        </ScrollTrack>
      </AlarmBody>
    </AlarmView>
  );
}

function MainTable({ rows, ...layout }) {
  return (
    <StageTable {...layout}>
      <colgroup><col style={{ width: 353 }} /><col style={{ width: 131 }} /><col /></colgroup>
      <tbody>
        {rowHeights.map((h, i) => {
          const [label, value, unit] = rows[i] || ["", "", ""];
          return (
            <StageRow key={i} $h={h}>
              <th scope="row">{label}</th>
              <td>{value}</td>
              <td><Unit $plain={unit === "°C"}>{unit}</Unit></td>
            </StageRow>
          );
        })}
      </tbody>
    </StageTable>
  );
}

function Lamps({ items, pad }) {
  return (
    <LampList>
      {items.map((text, i) => (
        <LampRow key={i} $small={text[0] === "*"} $pad={pad}>
          {text && <Lamp />}
          {text.replace("*", "")}
        </LampRow>
      ))}
    </LampList>
  );
}

function Params({ rows, pad, cols, center }) {
  return (
    <DataTable $pad={pad} $center={center}>
      <colgroup><col /><col style={{ width: cols[0] }} /><col style={{ width: cols[1] }} /></colgroup>
      <tbody>
        {rows.map(([label, value, unit], i) => (
          <tr key={i}>
            <th scope="row">{label}</th>
            <td>{value}</td>
            <td>{unit === KG ? <TinyUnit>{unit}</TinyUnit> : <Unit $plain={unit === "°C"}>{unit}</Unit>}</td>
          </tr>
        ))}
      </tbody>
    </DataTable>
  );
}

function Device({ title, icon, states, h = 220, after = 20, foot = 10, gap = 7, iconGap = 14, shift = 12, wide }) {
  return (
    <Card $h={h} $after={after} $foot={foot}>
      <CardTitle $gap={iconGap} $wide={wide}>{title}</CardTitle>
      {icon && <CardIcon $shift={shift}>{icon}</CardIcon>}
      {states && (
        <CardStates $gap={gap}>
          {states.map((s) => (
            <State key={s} $wide={wide} $bad={s === "Fault" || s === "Enggage"}>{s}</State>
          ))}
        </CardStates>
      )}
    </Card>
  );
}

export default function App() {
  return (
    <>
      <Global />
      <Desktop>
        <Station>
          <Header>
            <Alarms />
            <BrandBack />
            <Brand>
              <Logo w={207} h={76} font={13} mw={94} mh={53} id="logoLeft" />
              <Clock>12/17/2022 11:08:40 AM</Clock>
              <UserBox>Engineer</UserBox>
            </Brand>
            <Readings>
              {readings.map((r) => (
                <ReadingFrame key={r.label}>
                  <Reading $size={r.size} $at={r.at} $wide={r.wide}>
                    <span>{r.label}</span>
                    <strong>{r.value}</strong>
                    <span>{r.unit}</span>
                  </Reading>
                </ReadingFrame>
              ))}
            </Readings>
          </Header>
          <Body>
            <Canvas>
              <ScreenTitle>Turbine Main Parameter</ScreenTitle>
              <Stage>
                <MainTable rows={mainLeft} $col={2} $pad={20} $drop={9} $value={32} />
                <MainTable rows={mainRight} $col={4} $pad={10} $drop={2} $value={26} />
              </Stage>
            </Canvas>
            <SideNav>
              <SideButton aria-label="Back"><TurnArrow /></SideButton>
              <SideButton aria-label="Forward"><TurnArrow flip /></SideButton>
              {["Record", "Alarm", "LogOut", "ACK"].map((t) => <SideButton key={t}>{t}</SideButton>)}
              {[1, 2, 3, 4, 5, 6, 7, 8].map((n) => (
                <SideButton key={n} $spare={n === 8} aria-label={`Spare ${n}`} />
              ))}
            </SideNav>
          </Body>
          <ScreenNav>
            {screens.map((s, i) => (
              <ScreenButton key={s} $active={i === 10} $small={i === 0} $wrap={i === 0 || i === 8}>{s}</ScreenButton>
            ))}
          </ScreenNav>
        </Station>

        <Overview>
          <Band $h={28} />
          <PlantHeader>
            <Outline viewBox="0 0 1920 76" preserveAspectRatio="none" aria-hidden="true">
              <path
                d="M37 2v28q0 16 14 16h524q6 0 10 5l22 16q6 5 14 5h640q8 0 14-5l24-16q4-5 12-5h545q14 0 14-16V2"
                fill="none"
                stroke="#000"
                strokeWidth="2"
              />
            </Outline>
            <Tab>OVERVIEW</Tab>
            <Tab $active>TURBINE</Tab>
            <LogoSlot><Logo w={140} h={64} font={8} mw={64} mh={44} id="logoRight" /></LogoSlot>
            <PlantTitle>POWER PLANT 15 MW</PlantTitle>
          </PlantHeader>
          <Content>
            <Faults>
              <Columns>
                <Group $col={1}>
                  <GroupTitle><Lamp />TURBINE HEAVY FAULT</GroupTitle>
                  <Lamps items={heavy} />
                </Group>
                <Group $col={3}>
                  <GroupTitle><Lamp />TURBINE LIGHT FAULT</GroupTitle>
                  <Lamps items={light} />
                </Group>
                <Group $col={5}>
                  <GroupTitle $pad={24}>TURBINE PARAMETER</GroupTitle>
                  <Params rows={turbine} pad={10} cols={[50, 46]} center />
                </Group>
              </Columns>
              <Generator>
                <GroupTitle $center>GENERATOR PARAMETER</GroupTitle>
                <GeneratorTables>
                  <Params rows={gen1} pad={13} cols={[82, 31]} />
                  <Params rows={gen2} pad={4} cols={[86, 31]} />
                  <Params rows={gen3} pad={10} cols={[86, 26]} />
                </GeneratorTables>
              </Generator>
            </Faults>
            <Equipment>
              <Cards>
                <CardColumn>
                  <Device title="Aux Oil Pump" icon={<PumpIcon />} states={["Auto", "Remote", "Fault"]} gap={6} />
                  <Device title="Vapor Fan" icon={<FanIcon id="fanLeft" />} states={["Remote", "Fault"]} gap={8} after={10} />
                  <Device title="Tuning Device" icon={<PumpIcon />} states={["Auto", "Remote", "Fault"]} after={0} />
                </CardColumn>
                <CardColumn>
                  <Device title="EMG Oil Pump" icon={<PumpIcon />} states={["Auto", "Fault"]} gap={12} foot={30} />
                  <Device title="Gland Fan" icon={<FanIcon id="fanRight" />} states={["Remote", "Fault"]} gap={8} after={10} />
                  <Device title="ESV" icon={<ValveIcon />} h={106} after={4} iconGap={4} shift={2} />
                  <Device
                    title="TURNING CLUTCH"
                    states={["Enggage", "Dis-Enggage"]}
                    h={112}
                    after={0}
                    iconGap={4}
                    gap={10}
                    foot={14}
                    wide
                  />
                </CardColumn>
              </Cards>
              <Signals>
                <Lamps items={signals} pad={13} />
              </Signals>
            </Equipment>
          </Content>
          <Band $h={20} />
        </Overview>
      </Desktop>
    </>
  );
}
